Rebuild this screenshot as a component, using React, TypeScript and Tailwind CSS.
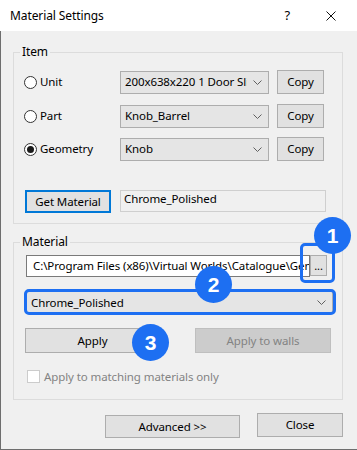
import React from "react";

const font = { fontFamily: '"Noto Sans", "Liberation Sans", sans-serif' };

function Chevron() {
  return (
    <svg width="9" height="5" viewBox="0 0 9 5" className="shrink-0">
      <path d="M0.5 0.5 L4.5 4.5 L8.5 0.5" fill="none" stroke="#606060" strokeWidth="1" />
    </svg>
  );
}

function Combo({ value, className }: { value: string; className: string }) {
  return (
    <div
      className={`flex items-center justify-between border border-[#adadad] bg-[#e5e5e5] pl-[4px] pr-[6px] ${className}`}
    >
      <span className="mr-[6px] overflow-hidden whitespace-nowrap">{value}</span>
      <Chevron />
    </div>
  );
}

function Radio({ label, checked }: { label: string; checked?: boolean }) {
  return (
    <div className="flex w-[96px] items-center gap-[3px]">
      <span className="flex h-[13px] w-[13px] items-center justify-center rounded-full border border-[#333333] bg-white">
        {checked && <span className="h-[7px] w-[7px] rounded-full bg-[#1a1a1a]" />}
      </span>
      <span>{label}</span>
    </div>
  );
}

function Btn({ children, className }: { children: React.ReactNode; className: string }) {
  return (
    <div className={`flex items-center justify-center border border-[#adadad] bg-[#e1e1e1] ${className}`}>
      {children}
    </div>
  );
}

function Callout({ n, className }: { n: number; className: string }) {
  return (
    <div
      className={`absolute flex h-[37px] w-[37px] items-center justify-center rounded-full bg-[#1d6ff2] text-[21px] font-bold text-white ${className}`}
      style={{ fontFamily: '"Liberation Sans", Arial, sans-serif' }}
    >
      {n}
    </div>
  );
}

export default function App() {
  return (
    <div
      className="relative flex h-[450px] w-[357px] flex-col text-[11.5px] tracking-[-0.1px] text-black"
      style={font}
    >
      {/* title bar */}
      <div className="flex h-[31px] shrink-0 items-center bg-white">
        <span className="ml-[10px] flex-1 text-[12px]">Material Settings</span>
        <span className="mr-[36px] text-[13px]">?</span>
        <svg width="10" height="10" viewBox="0 0 10 10" className="mr-[21px]">
          <path d="M0.5 0.5 L9.5 9.5 M9.5 0.5 L0.5 9.5" stroke="#111" strokeWidth="1" />
        </svg>
      </div>

      <div className="flex flex-1 flex-col border-b border-l border-[#6e6e6e] bg-[#f0f0f0] pl-[12px] pr-[14px] pt-[13px]">
        {/* Item group */}
        <fieldset className="border border-[#dcdcdc] pb-[10px]">
          <legend className="ml-[6px] px-[2px] text-[12px] leading-[16px]">Item</legend>
          <div className="flex flex-col pl-[10px] pt-[10px]">
            <div className="flex items-center">
              <Radio label="Unit" />
              <Combo value="200x638x220 1 Door Slim" className="h-[23px] w-[149px]" />
              <Btn className="ml-[8px] h-[24px] w-[47px]">Copy</Btn>
            </div>
            <div className="mt-[10px] flex items-center">
              <Radio label="Part" />
              <Combo value="Knob_Barrel" className="h-[23px] w-[149px]" />
              <Btn className="ml-[8px] h-[24px] w-[47px]">Copy</Btn>
            </div>
            <div className="mt-[9px] flex items-center">
              <Radio label="Geometry" checked />
              <Combo value="Knob" className="h-[23px] w-[149px]" />
              <Btn className="ml-[8px] h-[24px] w-[47px]">Copy</Btn>
            </div>
          </div>
          <div className="mt-[29px] flex items-start pl-[11px]">
            <div className="flex h-[23px] w-[86px] items-center justify-center border-2 border-[#0078d7] bg-[#e1e1e1]">
              Get Material
            </div>
            <div className="ml-[9px] h-[22px] w-[206px] border border-[#cfcfcf] bg-[#f0f0f0] pl-[3px] leading-[16px]">
              Chrome_Polished
            </div>
          </div>
        </fieldset>

        {/* Material group */}
        <fieldset className="mt-[10px] border border-[#dcdcdc] pb-[16px]">
          <legend className="ml-[6px] px-[2px] text-[12px] leading-[16px]">Material</legend>
          <div className="flex pl-[12px] pt-[5px]">
            <div className="flex h-[22px] w-[284px] items-center overflow-hidden whitespace-nowrap border border-[#7a7a7a] bg-white pl-[6px]">
              C:\Program Files (x86)\Virtual Worlds\Catalogue\Generic
            </div>
            <div className="flex h-[21px] w-[17px] items-center justify-center border border-[#adadad] bg-[#e1e1e1] text-[11px] leading-none">
              ...
            </div>
          </div>
          <div className="pl-[12px] pt-[14px]">
            <Combo value="Chrome_Polished" className="h-[23px] w-[307px]" />
          </div>
          <div className="flex pl-[11px] pt-[14px]">
            <Btn className="h-[25px] w-[135px]">Apply</Btn>
            <div className="ml-[35px] flex h-[25px] w-[136px] items-center justify-center border border-[#bfbfbf] bg-[#cccccc] text-[#838383]">
              Apply to walls
            </div>
          </div>
          <div className="flex items-center gap-[4px] pl-[13px] pt-[17px] text-[#838383]">
            <span className="h-[13px] w-[13px] border border-[#cccccc] bg-white" />
            <span className="leading-[13px]">Apply to matching materials only</span>
          </div>
        </fieldset>

        {/* bottom buttons */}
        <div className="mt-[13px] flex items-start justify-end gap-[17px]">
          <Btn className="mt-[2px] h-[23px] w-[135px]">Advanced &gt;&gt;</Btn>
          <Btn className="h-[24px] w-[86px]">Close</Btn>
        </div>
      </div>

      {/* annotations */}
      <div className="absolute left-[300px] top-[243px] h-[40px] w-[35px] rounded-[5px] border-[3px] border-[#1d6ff2]" />
      <div className="absolute left-[24px] top-[289px] h-[26px] w-[312px] rounded-[5px] border-[3px] border-[#1d6ff2]" />
      <Callout n={1} className="left-[314px] top-[217px]" />
      <Callout n={2} className="left-[195px] top-[266px]" />
      <Callout n={3} className="left-[132px] top-[324px]" />
    </div>
  );
}
